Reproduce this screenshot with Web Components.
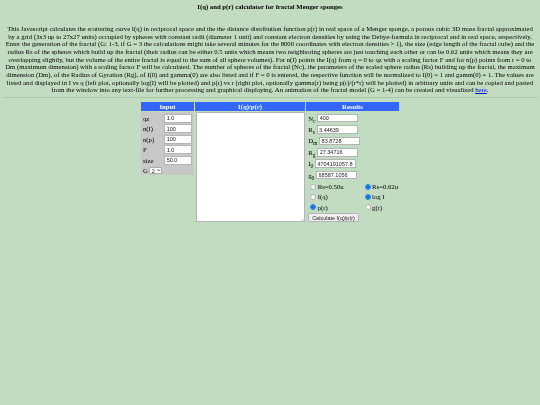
<!DOCTYPE html>
<html><head><meta charset="utf-8">
<style>
html,body{margin:0;padding:0;background:#c1dcc1;height:100%;overflow:hidden}
body{font-family:"Liberation Serif",serif;color:#000;font-size:6.73px}
results-panel radio-pair:first-of-type{margin-top:.8px}
</style></head><body>
<menger-page>
<page-title>I(q) and p(r) calculator for fractal Menger sponges</page-title>
<intro-text>This Javascript calculates the scattering curve I(q) in reciprocal space and the the distance distribution function p(r) in real space of a Menger sponge, a porous cubic 3D mass fractal approximated<br>by a grid (3x3 up to 27x27 units) occupied by spheres with constant radii (diameter 1 unit) and constant electron densities by using the Debye-formula in reciprocal and in real space, respectively.<br>Enter the generation of the fractal (G: 1-3, if G = 3 the calculations might take several minutes for the 8000 coordinates with electron densities &gt; 1), the size (edge length of the fractal cube) and the<br>radius Rs of the spheres which build up the fractal (their radius can be either 0.5 units which means two neighboring spheres are just touching each other or can be 0.62 units which means they are<br>overlapping slightly, but the volume of the entire fractal is equal to the sum of all sphere volumes). For n(I) points the I(q) from q = 0 to qz with a scaling factor F and for n(p) points from r = 0 to<br>Dm (maximum dimension) with a scaling factor F will be calculated. The number of spheres of the fractal (Nc), the parameters of the scaled sphere radius (Rs) building up the fractal, the maximum<br>dimension (Dm), of the Radius of Gyration (Rg), of I(0) and gamma(0) are also listed and if F = 0 is entered, the respective function will be normalized to I(0) = 1 and gamm(0) = 1. The values are<br>listed and displayed in I vs q (left plot, optionally log(I) will be plotted) and p(r) vs r (right plot, optionally gamma(r) being p(r)/(r*r) will be plotted) in arbitrary units and can be copied and pasted<br>from the window into any text-file for further processing and graphical displaying. An animation of the fractal model (G = 1-4) can be created and visualized <a href="#">here</a>.</intro-text>
<page-rule></page-rule>
<calc-table>
  <col-head slot="h1">Input</col-head>
  <col-head slot="h2">I(q)/p(r)</col-head>
  <col-head slot="h3">Results</col-head>
  <input-panel slot="input">
    <input-row label="qz" value="1.0"></input-row>
    <input-row label="n(I)" value="100"></input-row>
    <input-row label="n(p)" value="100"></input-row>
    <input-row label="F" value="1.0"></input-row>
    <input-row label="size" value="50.0"></input-row>
    <gen-row></gen-row>
  </input-panel>
  <output-box slot="output"></output-box>
  <results-panel slot="results">
    <result-row name="N" sub="c" value="400"></result-row>
    <result-row name="R" sub="s" value="3.44639"></result-row>
    <result-row name="D" sub="m" value="83.8728"></result-row>
    <result-row name="R" sub="g" value="27.34716"></result-row>
    <result-row name="I" sub="0" value="4704191057.85"></result-row>
    <result-row name="g" sub="0" value="68587.1056"></result-row>
    <radio-pair a="Rs=0.50u" b="Rs=0.62u" checked="b"></radio-pair>
    <radio-pair a="I(q)" b="log I" checked="b"></radio-pair>
    <radio-pair a="p(r)" b="g(r)" checked="a"></radio-pair>
    <calc-button>Calculate I(q)/p(r)</calc-button>
  </results-panel>
</calc-table>
</menger-page>
<script>
function def(name, css, html){
  customElements.define(name, class extends HTMLElement{
    connectedCallback(){
      if(this.shadowRoot) return;
      const r=this.attachShadow({mode:'open'});
      const h=typeof html==='function'?html(this):html;
      r.innerHTML='<style>'+css+'</style>'+h;
    }
  });
}
const ctl='font-family:"Liberation Sans",sans-serif;font-size:5.5px;color:#222;';
def('menger-page',':host{display:flex;flex-direction:column;align-items:stretch;filter:blur(.2px)}','<slot></slot>');
def('page-title',':host{display:block;text-align:center;font-weight:bold;line-height:8px;padding-top:3px;height:22.2px}','<slot></slot>');
def('intro-text',':host{display:block;text-align:center;line-height:7.63px;white-space:nowrap;height:72.3px} ::slotted(a){color:#0000ee}','<slot></slot>');
def('page-rule',':host{display:block;height:1px;background:#aec8ae;margin:0 3px}','');
def('calc-table',':host{display:grid;grid-template-columns:53px 110px 93px;column-gap:1px;margin:4px 0 0 141px;width:258px;align-items:start}',
 '<slot name="h1"></slot><slot name="h2"></slot><slot name="h3"></slot><slot name="input"></slot><slot name="output"></slot><slot name="results"></slot>');
def('col-head',':host{display:block;background:#3366ff;color:#fff;font-weight:bold;text-align:center;height:9px;line-height:9px;margin-bottom:1px}','<slot></slot>');
def('input-panel',':host{display:flex;flex-direction:column;background:#c8c8c8;padding-top:.6px;height:63px;box-sizing:border-box}','<slot></slot>');
def('input-row',':host{display:grid;grid-template-columns:20.7px 28.6px;align-items:center;height:10.5px;padding-left:2px} input{'+ctl+'width:28.6px;height:9px;box-sizing:border-box;border:1px solid #b4b4b4;padding:0 2px;margin:0;background:#fff;outline:0}',
 e=>'<span>'+e.getAttribute('label')+'</span><input value="'+e.getAttribute('value')+'">');
def('gen-row',':host{display:flex;align-items:center;gap:1.5px;height:9px;padding-left:2px;margin-top:.6px} .w{position:relative;display:block;width:12.5px;height:7.5px} select{'+ctl+'appearance:none;-webkit-appearance:none;display:block;width:12.5px;height:7.5px;box-sizing:border-box;border:1px solid #aaa;border-radius:1px;padding:0 0 0 1.5px;margin:0;background:#fff;outline:0} svg{position:absolute;right:1.3px;top:2.5px;width:3.6px;height:2.6px}',
 '<span>G</span><span class="w"><select><option>1</option><option selected>2</option><option>3</option></select><svg viewBox="0 0 8 6"><path d="M1 1l3 3.4L7 1" fill="none" stroke="#222" stroke-width="1.8"/></svg></span>');
def('output-box',':host{display:block;position:relative;margin-left:.5px} textarea{display:block;box-sizing:border-box;width:109.8px;height:109.7px;margin:0;padding:0;background:#fff;border:1px solid #b4b4b4;outline:0;resize:none} svg{position:absolute;right:1px;bottom:1px;width:3.5px;height:3.5px}',
 '<textarea></textarea><svg viewBox="0 0 7 7"><path d="M6.5 1L1 6.5M6.5 4L4 6.5" stroke="#999" fill="none"/></svg>');
def('results-panel',':host{display:flex;flex-direction:column;padding-left:2.2px}','<slot></slot>');
def('result-row',':host{display:flex;align-items:center;height:11.4px;gap:1.7px} sub{font-size:5.6px;line-height:0;vertical-align:-1.6px} input{'+ctl+'width:41px;height:8.6px;box-sizing:border-box;border:1px solid #b4b4b4;padding:0 1.5px;margin:0;background:#fff;outline:0}',
 e=>'<span>'+e.getAttribute('name')+'<sub>'+e.getAttribute('sub')+'</sub></span><input value="'+e.getAttribute('value')+'">');
def('radio-pair',':host{display:grid;grid-template-columns:54.4px 1fr;height:10.2px;align-items:center;padding-left:2.1px} label{display:flex;align-items:center;gap:1.4px} input{appearance:none;-webkit-appearance:none;width:6px;height:6px;margin:0;box-sizing:border-box;border:.5px solid #b0b0b0;border-radius:50%;background:#fff} input:checked{border:.5px solid #2a7de8;background:radial-gradient(circle,#1a6fe8 0 1.6px,#9cc4f5 2.2px,#4a90ea 3px)}',
 e=>{const c=e.getAttribute('checked');return '<label><input type="radio" '+(c==='a'?'checked':'')+'>'+e.getAttribute('a')+'</label><label><input type="radio" '+(c==='b'?'checked':'')+'>'+e.getAttribute('b')+'</label>';});
def('calc-button',':host{display:block;margin-top:1.2px} button{'+ctl+'display:block;height:9px;width:50.7px;padding:0;margin:0;border:1px solid #b4b4b4;border-radius:1px;background:#efefef;white-space:nowrap}','<button><slot></slot></button>');
</script>
</body></html>
